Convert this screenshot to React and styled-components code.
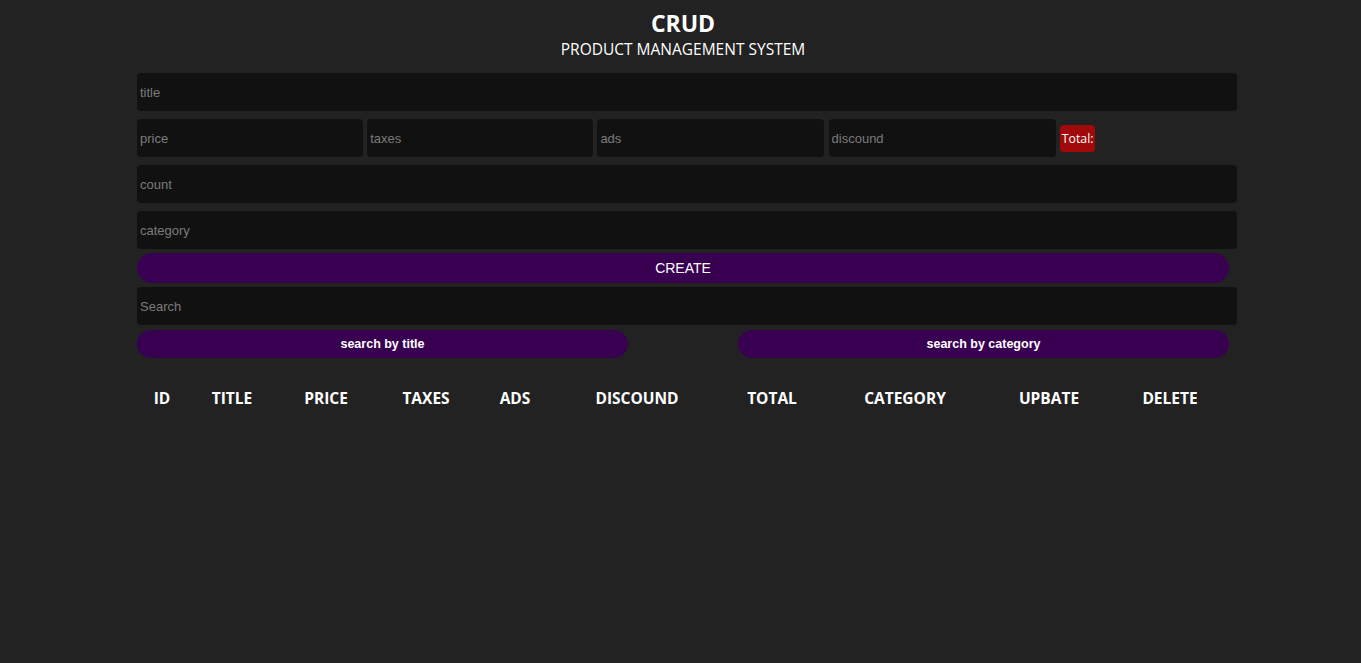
import React from "react";
import styled, { createGlobalStyle } from "styled-components";

const GlobalStyle = createGlobalStyle`
  * { box-sizing: border-box; }
  body {
    margin: 0;
    background: #222222;
    color: #fff;
    font-family: "Open Sans", "Noto Sans", sans-serif;
  }
`;

const Crud = styled.div`
  width: 1100px;
  margin-left: 137px;
  padding-bottom: 240px;
`;

const Head = styled.div`
  text-align: center;
  padding-top: 7px;
  margin-bottom: 14px;
  padding-right: 8px;

  h2 {
    margin: 0;
    font-size: 23px;
    font-weight: 700;
    line-height: 32px;
  }
  p {
    margin: 0;
    font-size: 15.5px;
    line-height: 20px;
  }
`;

const Input = styled.input`
  display: block;
  width: ${(p) => p.$w || "100%"};
  height: 38px;
  border: none;
  outline: none;
  border-radius: 4px;
  background: #111111;
  color: #fff;
  padding: 0 3px;
  font-family: "Liberation Sans", Arial, sans-serif;
  font-size: 13px;

  &::placeholder {
    color: #7b7b7b;
  }
`;

const Stack = styled.div`
  display: flex;
  flex-direction: column;
  gap: ${(p) => p.$gap || 8}px;
`;

const Price = styled.div`
  display: flex;
  align-items: center;
  gap: 4.2px;
`;

const Total = styled.small`
  background: #a10a0a;
  color: #fff;
  font-family: "Open Sans", sans-serif;
  font-size: 12.3px;
  height: 27px;
  line-height: 27px;
  padding: 0 2px;
  border-radius: 4px;
`;

const PillButton = styled.button`
  display: block;
  width: ${(p) => p.$w || "100%"};
  height: ${(p) => p.$h || 28}px;
  border: none;
  border-radius: 20px;
  background: #390052;
  color: #fff;
  font-family: "Liberation Sans", Arial, sans-serif;
  font-size: ${(p) => (p.$bold ? 12.5 : 14)}px;
  font-weight: ${(p) => (p.$bold ? 700 : 400)};
  cursor: pointer;
`;

const SearchRow = styled.div`
  display: flex;
  justify-content: space-between;
  width: 1092px;
  margin-top: 5px;
`;

const TableHead = styled.div`
  display: grid;
  grid-template-columns: 50px 90px 98px 102px 76px 168px 102px 164px 124px 118px;
  margin-top: 29px;
  font-family: "Open Sans", sans-serif;
  font-weight: 700;
  font-size: 15.5px;

  span {
    text-align: center;
  }
`;

const columns = [
  "ID",
  "TITLE",
  "PRICE",
  "TAXES",
  "ADS",
  "DISCOUND",
  "TOTAL",
  "CATEGORY",
  "UPBATE",
  "DELETE",
];

export default function App() {
  return (
    <>
      <GlobalStyle />
      <Crud>
        <Head>
          <h2>CRUD</h2>
          <p>PRODUCT MANAGEMENT SYSTEM</p>
        </Head>
        <Stack>
          <Input placeholder="title" />
          <Price>
            <Input $w="226px" placeholder="price" />
            <Input $w="226px" placeholder="taxes" />
            <Input $w="227px" placeholder="ads" />
            <Input $w="227px" placeholder="discound" />
            <Total>Total:</Total>
          </Price>
          <Input placeholder="count" />
        </Stack>
        <Stack $gap={4} style={{ marginTop: 8 }}>
          <Input placeholder="category" />
          <PillButton $w="1092px" $h={30}>
            CREATE
          </PillButton>
          <Input placeholder="Search" />
        </Stack>
        <SearchRow>
          <PillButton $w="491px" $bold>
            search by title
          </PillButton>
          <PillButton $w="491px" $bold>
            search by category
          </PillButton>
        </SearchRow>
        <TableHead>
          {columns.map((c) => (
            <span key={c}>{c}</span>
          ))}
        </TableHead>
      </Crud>
    </>
  );
}
